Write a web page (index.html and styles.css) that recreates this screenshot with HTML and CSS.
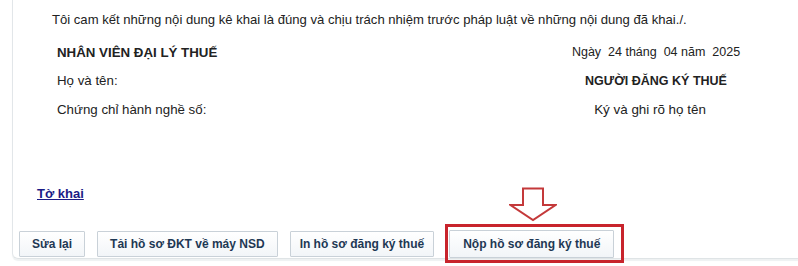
FILE: index.html
```html
<!DOCTYPE html>
<html lang="vi">
<head>
<meta charset="utf-8">
<title>Đăng ký thuế</title>
<link rel="stylesheet" href="styles.css">
</head>
<body>
<div class="panel">
  <p class="commit">Tôi cam kết những nội dung kê khai là đúng và chịu trách nhiệm trước pháp luật về những nội dung đã khai./.</p>
  <div class="sign">
    <div class="cell left bold">NHÂN VIÊN ĐẠI LÝ THUẾ</div>
    <div class="cell right">Ngày&nbsp; 24 tháng&nbsp; 04 năm&nbsp; 2025</div>
    <div class="cell left">Họ và tên:</div>
    <div class="cell right bold">NGƯỜI ĐĂNG KÝ THUẾ</div>
    <div class="cell left">Chứng chỉ hành nghề số:</div>
    <div class="cell right note">Ký và ghi rõ họ tên</div>
  </div>
  <div class="linkrow"><a class="link" href="#">Tờ khai</a></div>
  <div class="actions">
    <button class="btn" type="button">Sửa lại</button>
    <button class="btn" type="button">Tải hồ sơ ĐKT về máy NSD</button>
    <button class="btn btn-print" type="button">In hồ sơ đăng ký thuế</button>
    <span class="highlight">
      <svg class="arrow" width="48" height="35" viewBox="0 0 48 35" aria-hidden="true">
        <polygon points="14,1.5 34,1.5 34,18 46.5,18 24,33 1.5,18 14,18" fill="#fff" stroke="#c4393a" stroke-width="2" stroke-linejoin="miter"/>
      </svg>
      <button class="btn" type="button">Nộp hồ sơ đăng ký thuế</button>
    </span>
  </div>
</div>
</body>
</html>
```

FILE: styles.css
```css
html {
  background: #fff;
}
body {
  margin: 0;
  padding: 0 0 6px;
  font-family: "Liberation Sans", Arial, sans-serif;
  color: #222;
  font-size: 13px;
}
.panel {
  margin-left: 12px;
  width: 786px;
  height: 259px;
  box-sizing: border-box;
  border-left: 1px solid #e2e6e9;
  border-bottom: 1px solid #dfe4e6;
  border-bottom-left-radius: 6px;
  box-shadow: 0 2px 1px #eef1f2;
  padding-top: 10px;
}
.commit {
  margin: 0;
  padding-left: 39px;
  line-height: 20px;
  font-size: 13.1px;
}
.sign {
  margin-top: 8px;
  padding-left: 44px;
  padding-right: 42px;
  display: grid;
  grid-template-columns: 1fr 200px;
  grid-auto-rows: 28.5px;
  align-items: center;
  font-size: 12.5px;
}
.cell.left {
  font-size: 13.3px;
}
.cell.right {
  text-align: center;
}
.cell.note {
  font-size: 13.4px;
  padding-right: 12px;
}
.bold {
  font-weight: bold;
}
.linkrow {
  margin-top: 60px;
  padding-left: 24px;
  line-height: 20px;
}
.link {
  font-weight: bold;
  color: #1b1b86;
  text-decoration: underline;
}
.actions {
  margin-top: 26px;
  padding-left: 6px;
  height: 28px;
  display: flex;
  align-items: center;
  gap: 12px;
}
.btn {
  height: 26px;
  padding: 0 12px;
  border: 1px solid #c9d1d8;
  border-radius: 1px;
  background: linear-gradient(#ffffff, #f2f5f8);
  color: #1e3854;
  font-family: "Liberation Sans", Arial, sans-serif;
  font-weight: bold;
  font-size: 12px;
}
.btn-print {
  padding: 0 9px;
}
.highlight {
  position: relative;
  margin-left: -1px;
  display: flex;
  align-items: center;
  height: 33px;
  padding: 0 7px 0 1px;
  border: 3px solid #c8242c;
}
.highlight .btn {
  height: 28px;
  padding: 0 13px;
}
.arrow {
  position: absolute;
  left: 61px;
  top: -40px;
}
```
